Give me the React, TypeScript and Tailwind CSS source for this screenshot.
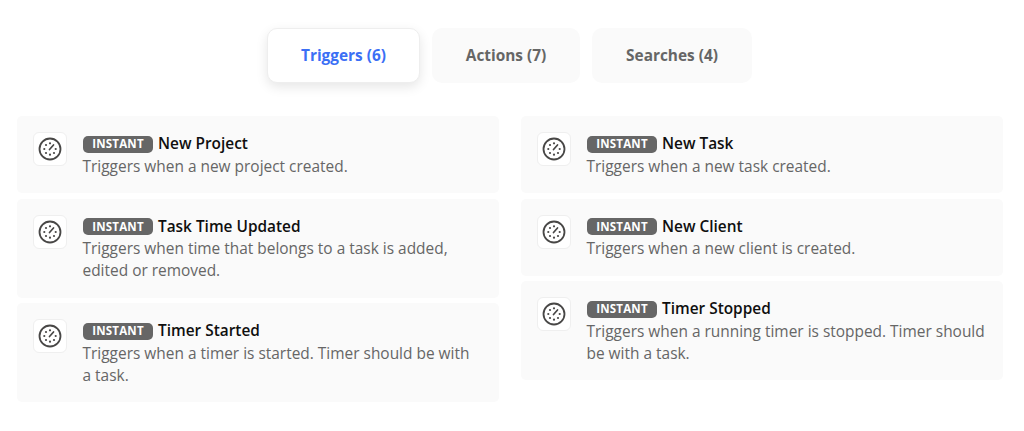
const leftItems = [
  { title: "New Project", text: "Triggers when a new project created." },
  { title: "Task Time Updated", text: "Triggers when time that belongs to a task is added, edited or removed." },
  { title: "Timer Started", text: "Triggers when a timer is started. Timer should be with a task." },
];

const rightItems = [
  { title: "New Task", text: "Triggers when a new task created." },
  { title: "New Client", text: "Triggers when a new client is created." },
  { title: "Timer Stopped", text: "Triggers when a running timer is stopped. Timer should be with a task." },
];

const ClockIcon = () => (
  <svg width="24" height="24" viewBox="0 0 24 24" fill="none">
    <circle cx="12" cy="12" r="10.5" stroke="#484746" strokeWidth="1.8" />
    <path d="M11.5 12.5L15.5 8" stroke="#484746" strokeWidth="1.7" strokeLinecap="round" />
    <g fill="#484746">
      <circle cx="8" cy="8" r="1.1" />
      <circle cx="12" cy="6.3" r="1.1" />
      <circle cx="6.3" cy="12" r="1.1" />
      <circle cx="8" cy="16" r="1.1" />
      <circle cx="12" cy="17.7" r="1.1" />
      <circle cx="16" cy="16" r="1.1" />
      <circle cx="17.7" cy="12" r="1.1" />
    </g>
  </svg>
);

const Card = ({ title, text }: { title: string; text: string }) => {
  return (
    <div className="flex rounded-[5px] bg-[#fafafa] pt-[16px] pr-[17.5px] pb-[16px] pl-[16px]">
      <div className="flex h-[34px] w-[34px] shrink-0 items-center justify-center rounded-[6px] border border-[#efefef] bg-white">
        <ClockIcon />
      </div>
      <div className="ml-[16px] min-w-0 pt-[1px]">
        <div className="flex h-[22px] items-center">
          <span className="flex h-[17px] w-[70px] items-center justify-center rounded-[5px] bg-[#666666] text-[11.5px] font-bold tracking-[0.2px] text-white">
            INSTANT
          </span>
          <span className="ml-[5px] text-[15.4px] leading-[22px] font-semibold text-[#0f0f0f]">{title}</span>
        </div>
        <p className="mt-[-0.5px] mb-[0.5px] ml-[-0.5px] text-[15.45px] leading-[22px] text-[#666666]">{text}</p>
      </div>
    </div>
  );
};

const Tab = ({ label, active, width }: { label: string; active?: boolean; width: string }) => {
  if (active) {
    return (
      <div className={`flex h-[55px] items-center justify-center rounded-[10px] border border-[#eeeeee] bg-white text-[15.4px] font-bold text-[#3b6ff5] shadow-[0_4px_12px_rgba(0,0,0,0.1)] ${width}`}>
        {label}
      </div>
    );
  }
  return (
    <div className={`flex h-[55px] items-center justify-center rounded-[10px] bg-[#fafafa] text-[15.4px] font-bold text-[#666666] ${width}`}>
      {label}
    </div>
  );
};

export default function App() {
  return (
    <div className="h-[431px] w-[1024px] overflow-hidden bg-white font-['Open_Sans',sans-serif]">
      <div className="flex justify-center gap-[12px] pt-[28px] pr-[5px]">
        <Tab label="Triggers (6)" active width="w-[153px]" />
        <Tab label="Actions (7)" width="w-[148px]" />
        <Tab label="Searches (4)" width="w-[160px]" />
      </div>
      <div className="mt-[33px] flex items-start gap-[22px] pr-[21px] pl-[17px]">
        <div className="flex w-[482px] flex-col gap-[5.5px]">
          {leftItems.map((item) => (
            <Card key={item.title} {...item} />
          ))}
        </div>
        <div className="flex w-[482px] flex-col gap-[5.5px]">
          {rightItems.map((item) => (
            <Card key={item.title} {...item} />
          ))}
        </div>
      </div>
    </div>
  );
}
